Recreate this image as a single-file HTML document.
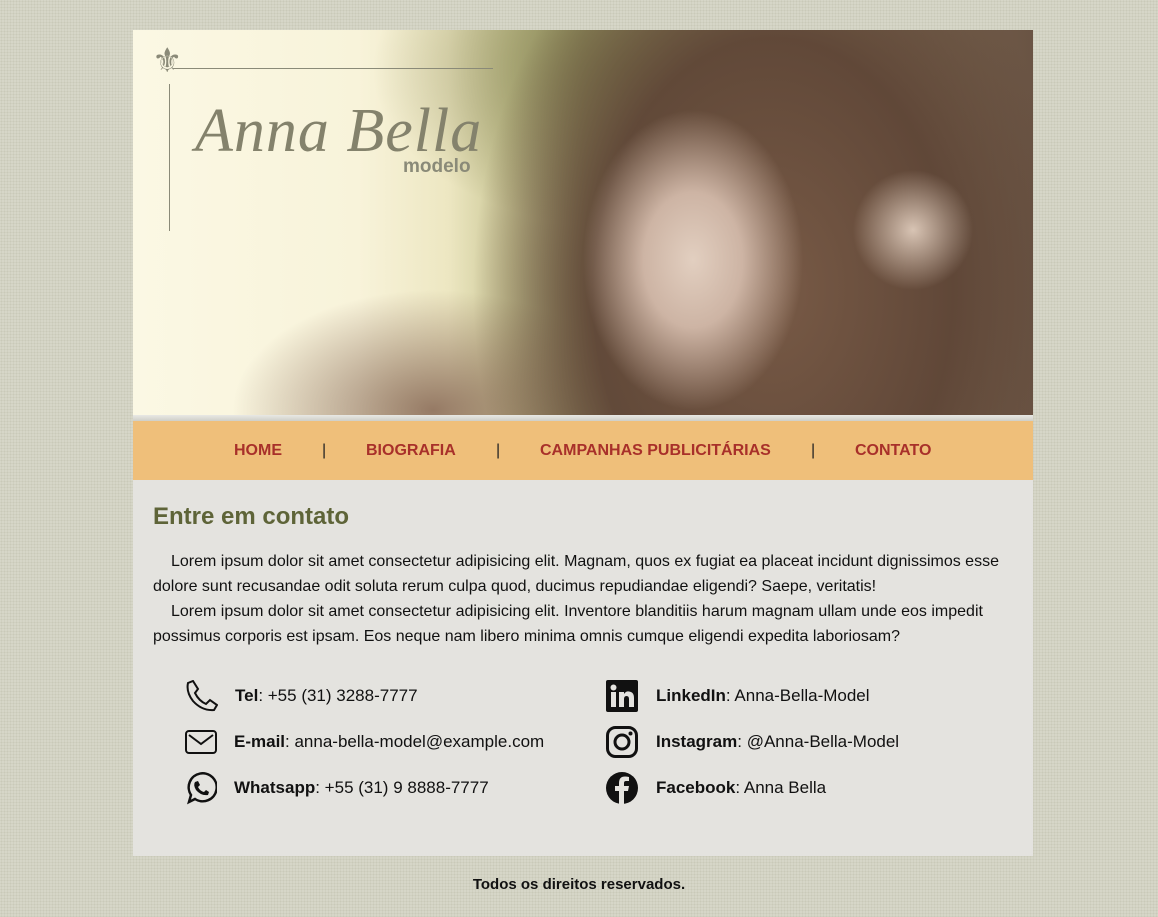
<!DOCTYPE html>
<html><head><meta charset="utf-8"><style>
*{margin:0;padding:0;box-sizing:border-box}
body{width:1158px;height:917px;background:#d6d6c8;font-family:"Liberation Sans",Arial,sans-serif;position:relative;overflow:hidden;
background-image:radial-gradient(#c9c9b9 1px,transparent 1px);background-size:3px 3px}
#wrap{position:absolute;left:133px;top:30px;width:900px}
#hdr{height:385px;position:relative;overflow:hidden;
background:
radial-gradient(ellipse 110px 150px at 560px 230px,#e2cfc0 0%,#cdb4a4 45%,rgba(170,140,120,0) 100%),
radial-gradient(ellipse 60px 60px at 780px 200px,#d8c4b4 0%,rgba(200,170,150,0) 100%),
radial-gradient(ellipse 300px 420px at 640px 260px,rgba(120,90,70,1) 0%,rgba(95,70,55,.95) 60%,rgba(90,70,55,0) 100%),
radial-gradient(ellipse 200px 120px at 300px 380px,rgba(140,110,90,.9) 0%,rgba(140,110,90,0) 100%),
radial-gradient(ellipse 260px 160px at 500px 40px,rgba(130,128,80,.9) 0%,rgba(130,128,80,0) 100%),
linear-gradient(90deg,#fbf8e4 0%,#f8f3da 25%,#ede7c2 35%,#c9c694 42%,#9c9868 50%,#8a7a5c 60%,#6a5444 100%);}
#hdr .f{position:absolute;left:19px;top:14px;font-size:34px;color:#8a8a78;line-height:1}
#hdr .hl{position:absolute;left:40px;top:38px;width:320px;height:1px;background:#8a8a78}
#hdr .vl{position:absolute;left:36px;top:54px;width:1px;height:147px;background:#8a8a78}
#hdr .n{position:absolute;left:62px;top:66px;font-family:"Liberation Serif",serif;font-style:italic;font-size:62px;color:#84826c;letter-spacing:1px}
#hdr .m{position:absolute;left:270px;top:126px;font-size:19px;font-weight:bold;color:#8a8a78}
#strip{height:6px;background:linear-gradient(#e8e8e4,#cfcfc8)}
#nav{height:59px;background:#efbf7a;display:flex;align-items:center;font-weight:bold;font-size:16px;color:#a8302a}
#nav span{position:absolute}
#main{background:#e4e3df;height:376px;padding:20px 20px}
h1{font-size:24px;color:#5e6438;margin-top:3px}
p{font-size:16px;line-height:25px;color:#111;margin-top:18px;text-indent:18px}
p+p{margin-top:0}
.c{position:absolute;font-size:17px;color:#111}
svg{position:absolute}
#ft{position:absolute;top:876px;left:0;width:1158px;text-align:center;font-weight:bold;font-size:15px;color:#111}
</style></head><body>
<div id="wrap">
<div id="hdr"><div class="f">⚜</div><div class="hl"></div><div class="vl"></div><div class="n">Anna Bella</div><div class="m">modelo</div></div>
<div id="strip"></div>
<div id="nav" style="position:relative">
<span style="left:101px">HOME</span><span style="left:189px;color:#222;font-weight:normal">|</span>
<span style="left:233px">BIOGRAFIA</span><span style="left:363px;color:#222;font-weight:normal">|</span>
<span style="left:407px">CAMPANHAS PUBLICITÁRIAS</span><span style="left:678px;color:#222;font-weight:normal">|</span>
<span style="left:722px">CONTATO</span></div>
<div id="main"><h1>Entre em contato</h1>
<p>Lorem ipsum dolor sit amet consectetur adipisicing elit. Magnam, quos ex fugiat ea placeat incidunt dignissimos esse dolore sunt recusandae odit soluta rerum culpa quod, ducimus repudiandae eligendi? Saepe, veritatis!</p>
<p>Lorem ipsum dolor sit amet consectetur adipisicing elit. Inventore blanditiis harum magnam ullam unde eos impedit possimus corporis est ipsam. Eos neque nam libero minima omnis cumque eligendi expedita laboriosam?</p>
</div></div>
<svg style="left:184px;top:680px" width="34" height="32" viewBox="0 0 34 32"><path d="M4 3 L9 1 L14 9 L11 13 Q15 21 22 24 L26 20 L33 25 L30 30 Q18 31 9 21 Q2 12 4 3Z" fill="none" stroke="#111" stroke-width="2"/></svg>
<svg style="left:185px;top:730px" width="32" height="24"><rect x="1" y="1" width="30" height="22" rx="3" fill="none" stroke="#111" stroke-width="2"/><path d="M4 5 L16 14 L28 5" fill="none" stroke="#111" stroke-width="2"/></svg>
<svg style="left:184px;top:772px" width="33" height="33" viewBox="0 0 33 33"><path d="M5 30 L7 23 A14 14 0 1 1 11 27 Z" fill="none" stroke="#111" stroke-width="2.5"/><path d="M11 10 L14 9 L16 13 L14 15 Q16 19 20 20 L22 18 L25 20 L24 23 Q17 24 12 18 Q9 13 11 10Z" fill="#111"/></svg>
<div class="c" style="left:235px;top:686px"><b>Tel</b>: +55 (31) 3288-7777</div>
<div class="c" style="left:234px;top:732px"><b>E-mail</b>: anna-bella-model@example.com</div>
<div class="c" style="left:234px;top:778px"><b>Whatsapp</b>: +55 (31) 9 8888-7777</div>
<svg style="left:606px;top:680px" width="32" height="32"><rect width="32" height="32" rx="2" fill="#111"/><rect x="5" y="12" width="5" height="15" fill="#e4e3df"/><circle cx="7.5" cy="7.5" r="3" fill="#e4e3df"/><path d="M13 12 H18 V14 Q20 11 23 11.5 Q28 12 28 18 V27 H23 V19 Q23 16 20.5 16 Q18 16 18 19 V27 H13Z" fill="#e4e3df"/></svg>
<svg style="left:606px;top:726px" width="32" height="32"><rect x="1.5" y="1.5" width="29" height="29" rx="8" fill="none" stroke="#111" stroke-width="3"/><circle cx="16" cy="16" r="7" fill="none" stroke="#111" stroke-width="3"/><circle cx="24.5" cy="7.5" r="2" fill="#111"/></svg>
<svg style="left:606px;top:772px" width="32" height="32" viewBox="0 0 32 32"><circle cx="16" cy="16" r="16" fill="#111"/><path d="M18 32 V19 H22 L23 14 H18 V11 Q18 9 20 9 H23 V5 Q21 4.5 19 4.5 Q13 4.5 13 11 V14 H9 V19 H13 V32Z" fill="#e4e3df"/></svg>
<div class="c" style="left:656px;top:686px"><b>LinkedIn</b>: Anna-Bella-Model</div>
<div class="c" style="left:656px;top:732px"><b>Instagram</b>: @Anna-Bella-Model</div>
<div class="c" style="left:656px;top:778px"><b>Facebook</b>: Anna Bella</div>
<div id="ft">Todos os direitos reservados.</div>
</body></html>
